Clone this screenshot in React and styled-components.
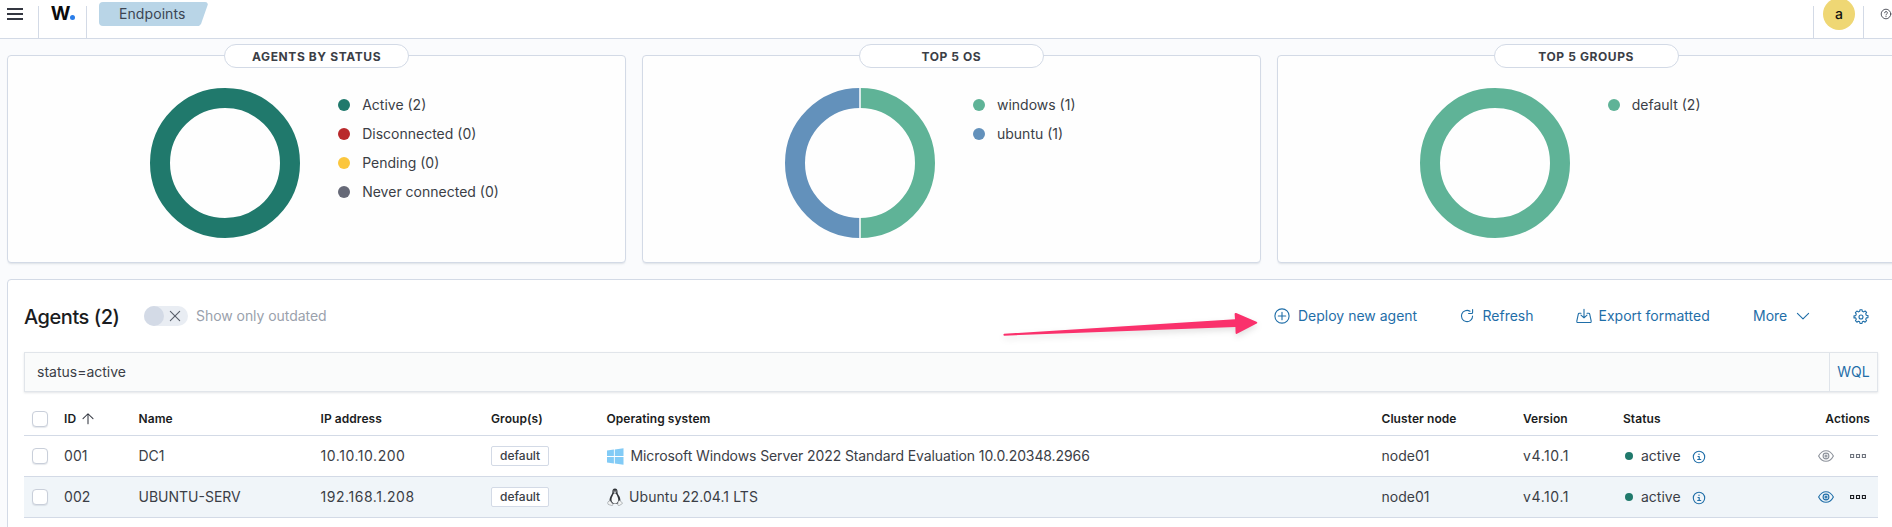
import React from "react";
import styled, { createGlobalStyle, css } from "styled-components";

const GlobalStyle = createGlobalStyle`
  * { box-sizing: border-box; }
  html, body { margin: 0; height: 100%; overflow: hidden; }
  body {
    background: #fafbfd;
    color: #3b3e46;
    font-family: Inter, "Liberation Sans", sans-serif;
    font-size: 14px;
    line-height: 20px;
  }
`;

const Page = styled.div`
  height: 527px;
  overflow: hidden;
`;

/* ---------- header ---------- */
const Header = styled.header`
  height: 39px;
  background: #fff;
  border-bottom: 1px solid #d3dae6;
  display: flex;
  align-items: flex-end;
  overflow: hidden;
`;

const HeaderCell = styled.div`
  height: 48px;
  flex: none;
  width: ${(p) => p.$width}px;
  display: flex;
  align-items: center;
  justify-content: ${(p) => p.$align || "center"};
  padding-left: ${(p) => p.$indent || 0}px;
  ${(p) =>
    p.$divider &&
    css`
      background: linear-gradient(#d3dae6, #d3dae6) right bottom / 1px 32px no-repeat;
    `}
`;

const Spacer = styled.div`
  flex: 1;
`;

const Burger = styled.span`
  width: 16px;
  height: 12px;
  border: solid #343741;
  border-width: 2px 0;
  display: flex;
  align-items: center;
  &::before {
    content: "";
    width: 100%;
    height: 2px;
    background: #343741;
  }
`;

const Logo = styled.span`
  font-size: 19px;
  font-weight: 700;
  line-height: 20px;
  color: #0b0b0c;
  display: flex;
  align-items: baseline;
  &::after {
    content: "";
    width: 5px;
    height: 5px;
    border-radius: 50%;
    background: #2a7de9;
  }
`;

const Breadcrumb = styled.a`
  width: 109px;
  height: 24px;
  padding-left: 20px;
  line-height: 24px;
  letter-spacing: 0.08px;
  color: #3c4553;
  background: #b9d5e7;
  border-radius: 4px 3px 3px 4px;
  clip-path: polygon(0 0, 108px 0, 109px 2px, 102px 22px, 100px 24px, 0 24px);
`;

const Avatar = styled.span`
  width: 32px;
  height: 32px;
  border-radius: 50%;
  background: #efd774;
  color: #111;
  font-weight: 500;
  text-align: center;
  line-height: 32px;
  font-size: 14px;
`;

/* ---------- summary cards ---------- */
const Cards = styled.section`
  display: flex;
  gap: 16px;
  padding: 16px 0 0 7.2px;
`;

const Card = styled.article`
  flex: none;
  width: 618.8px;
  height: 208px;
  background: #fefefe;
  border: 1px solid #d3dae6;
  border-radius: 4px;
  box-shadow: 0 2px 2px -1px rgba(152, 162, 179, 0.3);
  display: flex;
  flex-direction: column;
`;

const CardTitle = styled.h2`
  margin: -12px auto 0;
  width: 185px;
  height: 24px;
  border: 1px solid #d3dae6;
  border-radius: 12px;
  background: #fff;
  text-align: center;
  font-size: 12px;
  font-weight: 700;
  line-height: 23px;
  letter-spacing: 0.6px;
  text-transform: uppercase;
`;

const CardBody = styled.div`
  display: flex;
  padding: 20px 0 0 142px;
`;

const Legend = styled.ul`
  list-style: none;
  margin: 2px 0 0 38px;
  padding: 0;
`;

const LegendItem = styled.li`
  height: 29px;
  display: flex;
  align-items: center;
  gap: 12px;
  &::before {
    content: "";
    width: 12px;
    height: 12px;
    border-radius: 50%;
    background: ${(p) => p.$color};
  }
`;

/* ---------- agents panel ---------- */
const Panel = styled.section`
  margin: 16px 0 0 7px;
  width: 1890px;
  height: 300px;
  padding: 0 0 0 16px;
  background: #fff;
  border: 1px solid #d3dae6;
  border-radius: 4px;
`;

const Toolbar = styled.div`
  width: 1854px;
  height: 72px;
  display: flex;
  align-items: center;
  position: relative;
`;

const Title = styled.h1`
  margin: 2px 0 0;
  width: 120px;
  font-size: 20px;
  font-weight: 500;
  line-height: 24px;
  letter-spacing: -0.45px;
  color: #1a1c21;
  white-space: nowrap;
`;

const Switch = styled.span`
  width: 44px;
  height: 20px;
  border-radius: 10px;
  background: #e9edf3;
  display: flex;
  align-items: center;
  justify-content: space-between;
  padding-right: 7px;
  &::before {
    content: "";
    width: 20px;
    height: 20px;
    border-radius: 50%;
    background: #d3dae6;
  }
`;

const SwitchLabel = styled.span`
  margin-left: 8px;
  letter-spacing: -0.05px;
  color: #9aa1ac;
`;

const Action = styled.a`
  display: flex;
  align-items: center;
  gap: ${(p) => p.$gap || 8}px;
  margin-top: ${(p) => p.$drop || 0}px;
  width: ${(p) => p.$width}px;
  color: #1f6ea8;
  white-space: nowrap;
`;

const Pointer = styled.svg`
  position: absolute;
  left: 976px;
  top: 26px;
  filter: drop-shadow(0 3px 3px rgba(0, 0, 0, 0.12));
`;

const SearchBar = styled.div`
  width: 1854px;
  height: 40px;
  display: flex;
  align-items: stretch;
  line-height: 38px;
  background: #fafbfb;
  border: 1px solid #e1e5ea;
  box-shadow: 0 1px 2px rgba(100, 110, 120, 0.18);
`;

const Query = styled.span`
  flex: 1;
  padding-left: 12px;
`;

const Language = styled.a`
  width: 48px;
  text-align: center;
  border-left: 1px solid #dfe4ea;
  color: #1f6ea8;
`;

const Row = styled.div`
  width: 1854px;
  height: ${(p) => (p.$head ? 44 : 41)}px;
  display: grid;
  grid-template-columns: 40px 74.5px 182px 170.5px 115.5px 775px 141.5px 100px 1fr 80px;
  align-items: center;
  border-bottom: 1px solid #d3dae6;
  background: ${(p) => (p.$hover ? "#f0f5f9" : "transparent")};
  ${(p) =>
    p.$head &&
    css`
      font-size: 12px;
      font-weight: 600;
      letter-spacing: 0.07px;
      color: #1a1c21;
      padding-top: 10px;
    `}
`;

const Cell = styled.div`
  display: flex;
  align-items: center;
  gap: ${(p) => p.$gap || 0}px;
  justify-content: ${(p) => (p.$end ? "flex-end" : "flex-start")};
  padding-right: ${(p) => p.$pad || 0}px;
  letter-spacing: ${(p) => (p.$track ? `${p.$track}px` : "inherit")};
  white-space: nowrap;
`;

const Checkbox = styled.span`
  width: 16px;
  height: 16px;
  margin-left: 8px;
  background: #fff;
  border: 1px solid #c9cfda;
  border-radius: 4px;
  box-shadow: 0 1px 1px rgba(152, 162, 179, 0.25);
`;

const Badge = styled.span`
  height: 20px;
  padding: 0 8px;
  font-size: 12px;
  font-weight: 500;
  line-height: 18px;
  background: #fff;
  border: 1px solid #d3dae6;
  border-radius: 2px;
`;

const StatusDot = styled.i`
  width: 8px;
  height: 8px;
  margin-left: 2px;
  border-radius: 50%;
  background: #20796c;
`;

const InfoSlot = styled.span`
  display: flex;
  margin: 2px 0 0 2px;
`;

const Icon = ({ size = 16, color = "currentColor", children }) => (
  <svg
    width={size}
    height={size}
    viewBox="0 0 16 16"
    fill="none"
    stroke={color}
    strokeWidth="1.1"
    strokeLinecap="round"
    strokeLinejoin="round"
  >
    {children}
  </svg>
);

const PlusCircle = () => (
  <Icon>
    <circle cx="8" cy="8" r="7.1" />
    <path d="M8 4.3v7.4M4.3 8h7.4" />
  </Icon>
);

const Refresh = () => (
  <Icon>
    <path d="M11 3.3A5.6 5.6 0 1 0 13.6 8M13.6 1.5v3a1 1 0 0 1-1 1h-3" />
  </Icon>
);

const Export = () => (
  <Icon>
    <path d="M8 1.2v8.6M5 7.2l3 2.7 3-2.7M5 5.3H3.3a1 1 0 0 0-1 .8L.8 13.2a1 1 0 0 0 1 1.3h12.4a1 1 0 0 0 1-1.3l-1.5-7.1a1 1 0 0 0-1-.8H11" />
  </Icon>
);

const Chevron = () => (
  <Icon>
    <path d="M2.4 5.3 8 10.9l5.6-5.6" />
  </Icon>
);

const Gear = () => (
  <Icon>
    <path d="M6.7 2.3 7 .7h2l.3 1.6 1.4.6 1.4-.9 1.5 1.4-.9 1.4.6 1.5 1.7.3v2l-1.7.3-.6 1.4.9 1.4-1.5 1.5-1.4-1-1.4.6-.3 1.7H7l-.3-1.7-1.4-.6-1.4 1-1.5-1.5.9-1.4-.6-1.4L1 8.9v-2l1.7-.3.6-1.5-.9-1.4L3.9 2l1.4.9z" />
    <circle cx="8" cy="8" r="2" />
  </Icon>
);

const Cross = () => (
  <Icon size={12} color="#5a606b">
    <path d="M1.8 1.8l12.4 12.4M14.2 1.8 1.8 14.2" strokeWidth="1.5" />
  </Icon>
);

const SortUp = () => (
  <Icon size={14} color="#343741">
    <path d="M8 13.5V2M2.3 7.6 8 2l5.7 5.6" strokeWidth="1.2" />
  </Icon>
);

const Info = () => (
  <Icon color="#1f6ea8">
    <circle cx="8" cy="8" r="5.7" />
    <path d="M7 7.5h1.2v3M6.7 10.5h3M8 5.1v.3" strokeWidth="1.2" />
  </Icon>
);

const Eye = ({ color }) => (
  <Icon color={color}>
    <path d="M.6 8C2.4 4.6 5 2.7 8 2.7S13.6 4.6 15.4 8C13.6 11.4 11 13.3 8 13.3S2.4 11.4.6 8z" />
    <circle cx="8" cy="8" r="2.9" />
    <circle cx="8" cy="8" r="1" />
  </Icon>
);

const Dots = ({ color }) => (
  <Icon color={color}>
    <path d="M.6 6.5h3v3h-3zM6.5 6.5h3v3h-3zM12.4 6.5h3v3h-3z" strokeLinejoin="miter" />
  </Icon>
);

const Help = () => (
  <Icon color="#343741">
    <circle cx="8" cy="8" r="6.4" />
    <path d="M6.2 6.4a1.8 1.8 0 1 1 2.6 1.7c-.6.3-.8.6-.8 1.2M8 11.3v.3" />
  </Icon>
);

const WindowsLogo = () => (
  <svg width="17" height="17" viewBox="0 0 17 17" fill="#82cbf6">
    <path d="M0 2.5 6.9 1.5V8H0zM7.8 1.4 16.5.2V8H7.8zM0 8.9h6.9v6.6L0 14.5zM7.8 8.9h8.7v7.9l-8.7-1.2z" />
  </svg>
);

const Tux = () => (
  <svg width="16" height="18" viewBox="0 0 16 18">
    <path d="M8 .4c-2 0-2.7 1.4-2.6 3.2.1 1.7-.5 2.6-1.4 3.9C3 9 2.5 10.8 2.5 12.5l2 3.3h6.6l2.3-3.2c0-2-.6-3.8-1.6-5.2-.9-1.2-1.3-2-1.3-3.8C10.5 1.6 9.7.4 8 .4z" fill="#303338" />
    <path d="M7.9 5.2c-1 .4-1.5.6-2 2-.7 1.5-1.5 3-1.4 4.9.2 2.2 1.7 3.4 3.5 3.4s3.2-1.2 3.3-3.2c.1-2-.7-3.5-1.4-5.1-.5-1.2-1-1.7-2-2z" fill="#f7f9fa" />
    <path d="M6.4 4.3 8 3.6l1.5.7L8 5.2z" fill="#c9ccce" />
    <circle cx="7" cy="3" r=".6" fill="#fff" />
    <circle cx="9" cy="3" r=".6" fill="#fff" />
    <path d="M3 12.5 1 13.8c-.6.6.1 1.2-.2 2-.2.8 2.5 1.1 3.8 1.7 1 .4 1.6-.6 1-1.5zM12.6 12.5l2.2 1.7c.5.6.9 1.1.4 1.5l-2.7 1.7c-1 .5-1.9 0-1.7-1.2l.3-2.7z" fill="#f2f3f3" stroke="#8b9096" strokeWidth=".6" />
  </svg>
);

const Donut = ({ slices }) => {
  const c = 2 * Math.PI * 65;
  return (
    <svg width="150" height="150" viewBox="0 0 150 150">
      {slices.map((color, i) => (
        <circle
          key={color}
          cx="75"
          cy="75"
          r="65"
          fill="none"
          stroke={color}
          strokeWidth="20"
          strokeDasharray={`${c / slices.length} ${c}`}
          transform={`rotate(${-90 + (360 / slices.length) * i} 75 75)`}
        />
      ))}
      {slices.length > 1 && <path d="M75 0v20M75 130v20" stroke="#fff" strokeWidth="1.5" />}
    </svg>
  );
};

const cards = [
  {
    title: "Agents by status",
    slices: ["#20796c"],
    legend: [
      ["Active (2)", "#20796c"],
      ["Disconnected (0)", "#b9292b"],
      ["Pending (0)", "#fbc63d"],
      ["Never connected (0)", "#666977"],
    ],
  },
  {
    title: "Top 5 OS",
    slices: ["#5fb397", "#6391bb"],
    legend: [
      ["windows (1)", "#5fb397"],
      ["ubuntu (1)", "#6391bb"],
    ],
  },
  { title: "Top 5 groups", slices: ["#5fb397"], legend: [["default (2)", "#5fb397"]] },
];

const agents = [
  {
    id: "001",
    name: "DC1",
    ip: "10.10.10.200",
    Os: WindowsLogo,
    os: "Microsoft Windows Server 2022 Standard Evaluation 10.0.20348.2966",
    track: -0.1,
    gap: 7,
  },
  {
    id: "002",
    name: "UBUNTU-SERV",
    ip: "192.168.1.208",
    Os: Tux,
    os: "Ubuntu 22.04.1 LTS",
    track: 0.08,
    gap: 6.5,
    hover: true,
  },
];

export default function App() {
  return (
    <Page>
      <GlobalStyle />
      <Header>
        <HeaderCell $width={39} $divider $align="flex-start" $indent={7}>
          <Burger />
        </HeaderCell>
        <HeaderCell $width={48} $divider>
          <Logo>W</Logo>
        </HeaderCell>
        <HeaderCell $width={140} $align="flex-start" $indent={12}>
          <Breadcrumb>Endpoints</Breadcrumb>
        </HeaderCell>
        <Spacer />
        <HeaderCell $width={1} $divider />
        <HeaderCell $width={50} $divider>
          <Avatar>a</Avatar>
        </HeaderCell>
        <HeaderCell $width={28} $align="flex-start" $indent={16}>
          <Help />
        </HeaderCell>
      </Header>

      <Cards>
        {cards.map((card) => (
          <Card key={card.title}>
            <CardTitle>{card.title}</CardTitle>
            <CardBody>
              <Donut slices={card.slices} />
              <Legend>
                {card.legend.map(([label, color]) => (
                  <LegendItem key={label} $color={color}>
                    {label}
                  </LegendItem>
                ))}
              </Legend>
            </CardBody>
          </Card>
        ))}
      </Cards>

      <Panel>
        <Toolbar>
          <Title>Agents (2)</Title>
          <Switch>
            <Cross />
          </Switch>
          <SwitchLabel>Show only outdated</SwitchLabel>
          <Spacer />
          <Action $width={185} $gap={8.5}>
            <PlusCircle />
            Deploy new agent
          </Action>
          <Action $width={117}>
            <Refresh />
            Refresh
          </Action>
          <Action $width={177.5} $gap={7}>
            <Export />
            Export formatted
          </Action>
          <Action $width={100}>
            More
            <Chevron />
          </Action>
          <Action $width={25} $drop={2}>
            <Gear />
          </Action>
          <Pointer width="262" height="34" viewBox="0 0 262 34">
            <path d="M4 27.8 235 13.2 234.6 8Q234.7 6.5 236.2 7L256.5 15.7Q258 16.6 256.7 17.5L237 27.8Q235.7 28.3 235.6 27L235.4 21 4 29.7Q2.8 28.7 4 27.8z" fill="#fa316c" />
          </Pointer>
        </Toolbar>
        <SearchBar>
          <Query>status=active</Query>
          <Language>WQL</Language>
        </SearchBar>
        <Row $head>
          <Cell>
            <Checkbox />
          </Cell>
          <Cell $gap={5}>
            ID
            <SortUp />
          </Cell>
          <Cell>Name</Cell>
          <Cell>IP address</Cell>
          <Cell>Group(s)</Cell>
          <Cell>Operating system</Cell>
          <Cell>Cluster node</Cell>
          <Cell>Version</Cell>
          <Cell>Status</Cell>
          <Cell $end $pad={8}>
            Actions
          </Cell>
        </Row>
        {agents.map(({ id, name, ip, Os, os, track, gap, hover }) => (
          <Row key={id} $hover={hover}>
            <Cell>
              <Checkbox />
            </Cell>
            <Cell $track={0.1}>{id}</Cell>
            <Cell>{name}</Cell>
            <Cell $track={0.55}>{ip}</Cell>
            <Cell>
              <Badge>default</Badge>
            </Cell>
            <Cell $gap={gap} $track={track}>
              <Os />
              {os}
            </Cell>
            <Cell>node01</Cell>
            <Cell $track={0.6}>v4.10.1</Cell>
            <Cell $gap={8}>
              <StatusDot />
              active
              <InfoSlot>
                <Info />
              </InfoSlot>
            </Cell>
            <Cell $end $gap={16} $pad={12}>
              <Eye color={hover ? "#1f6ea8" : "#8d929b"} />
              <Dots color={hover ? "#1a1c21" : "#6d727c"} />
            </Cell>
          </Row>
        ))}
      </Panel>
    </Page>
  );
}
